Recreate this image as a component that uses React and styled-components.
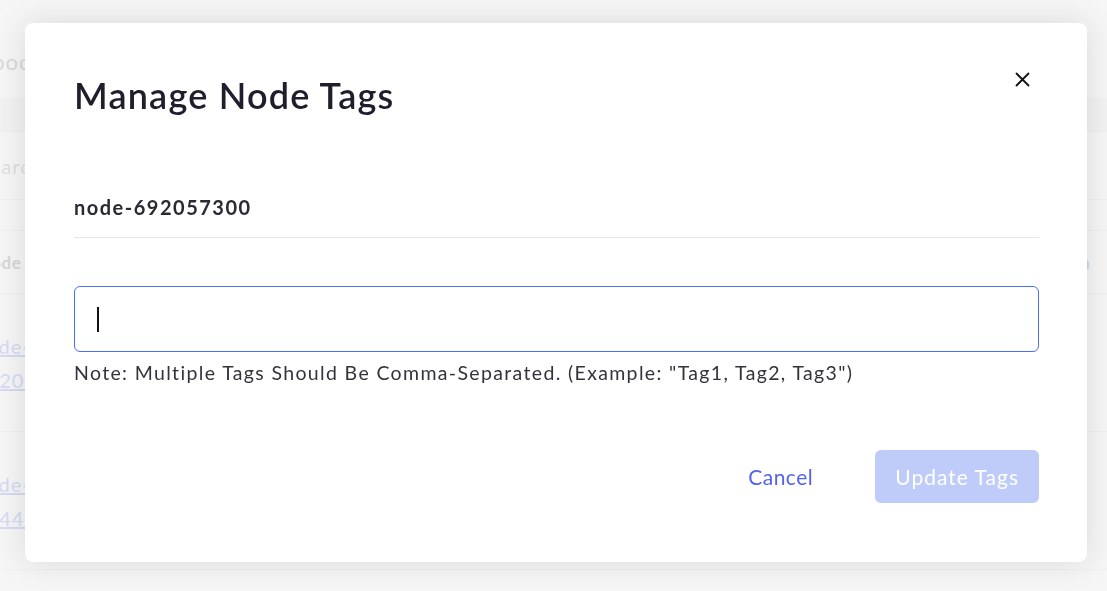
import React from "react";
import styled, { createGlobalStyle } from "styled-components";

const GlobalStyle = createGlobalStyle`
  html, body {
    margin: 0;
    height: 100%;
    overflow: hidden;
    background: #f5f5f5;
    font-family: "Lato", "Noto Sans", sans-serif;
  }
  * {
    box-sizing: border-box;
  }
`;

const nodes = [
  { id: "node-692057300" },
  { id: "node-814459071" },
];

function App() {
  return (
    <>
      <GlobalStyle />
      <Page>
        <PageTitle>Notebook</PageTitle>
        <TabBand />
        <SearchRow>Search</SearchRow>
        <Table>
          <HeadRow>
            <HeadCell>Node</HeadCell>
            <HeadCell $right>Action</HeadCell>
          </HeadRow>
          {nodes.map((n) => (
            <Row key={n.id}>
              <NodeLink>
                node-
                <br />
                {n.id.slice(5)}
              </NodeLink>
            </Row>
          ))}
        </Table>
      </Page>

      <Backdrop>
        <Modal>
          <ModalHeader>
            <Title>Manage Node Tags</Title>
            <CloseButton aria-label="Close">
              <svg width="15" height="15" viewBox="0 0 15 15">
                <path
                  d="M1.5 1.5 L13.5 13.5 M13.5 1.5 L1.5 13.5"
                  stroke="#111"
                  strokeWidth="1.8"
                  strokeLinecap="round"
                />
              </svg>
            </CloseButton>
          </ModalHeader>

          <NodeName>node-692057300</NodeName>

          <InputBox>
            <Caret />
            <TagInput type="text" aria-label="Tags" />
          </InputBox>
          <Note>
            Note: Multiple Tags Should Be Comma-Separated. (Example: "Tag1, Tag2,
            Tag3")
          </Note>

          <Actions>
            <TextButton>Cancel</TextButton>
            <PrimaryButton disabled>Update Tags</PrimaryButton>
          </Actions>
        </Modal>
      </Backdrop>
    </>
  );
}

/* background page, mostly hidden by the modal */

const Page = styled.main`
  margin-left: -22px;
  padding-top: 46px;
  color: #cfcfcf;
`;

const PageTitle = styled.h2`
  margin: 0 0 0 -38px;
  font-size: 22px;
  font-weight: 400;
  letter-spacing: 1px;
  line-height: 32px;
  color: #c9c9c9;
`;

const TabBand = styled.div`
  margin-top: 20px;
  height: 34px;
  background: #efefef;
  border-bottom: 1px solid #e9e9e9;
`;

const SearchRow = styled.div`
  height: 68px;
  display: flex;
  align-items: center;
  font-size: 20px;
  letter-spacing: 1px;
  color: #d2d2d2;
  border-bottom: 1px solid #ebebeb;
`;

const Table = styled.div`
  margin-top: 30px;
`;

const HeadRow = styled.div`
  height: 64px;
  display: flex;
  align-items: center;
  justify-content: space-between;
  border-top: 1px solid #ebebeb;
  border-bottom: 1px solid #ebebeb;
`;

const HeadCell = styled.span`
  font-size: 17px;
  font-weight: 700;
  letter-spacing: 0.5px;
  color: #c4c4c4;
  margin-right: ${({ $right }) => ($right ? "17px" : "0")};
`;

const Row = styled.div`
  height: 138px;
  display: flex;
  align-items: center;
  border-bottom: 1px solid #ebebeb;
`;

const NodeLink = styled.a`
  margin-left: -4px;
  font-size: 20px;
  letter-spacing: 1px;
  line-height: 34px;
  color: #c3caf3;
  text-decoration: underline;
`;

/* modal */

const Backdrop = styled.div`
  position: fixed;
  inset: 0;
  display: flex;
  align-items: flex-start;
  padding: 23px 20px 0 25px;
  background: rgba(250, 250, 250, 0.35);
`;

const Modal = styled.section`
  width: 100%;
  display: flex;
  flex-direction: column;
  padding: 48px 48px 59px 49px;
  background: #fff;
  border-radius: 8px;
  box-shadow: 0 0 32px rgba(0, 0, 0, 0.13);
  color: #24232f;
`;

const ModalHeader = styled.div`
  display: flex;
  justify-content: space-between;
  align-items: flex-start;
`;

const Title = styled.h1`
  margin: 0;
  font-size: 36px;
  font-weight: 600;
  letter-spacing: 1.2px;
  line-height: 48px;
  color: #1f1e2c;
`;

const CloseButton = styled.button`
  width: 32px;
  height: 32px;
  margin-top: -8px;
  margin-right: 1px;
  padding: 0;
  display: flex;
  align-items: center;
  justify-content: center;
  background: transparent;
  border: none;
  cursor: pointer;
`;

const NodeName = styled.div`
  margin-top: 75px;
  padding-bottom: 17px;
  border-bottom: 1px solid #e6e6e6;
  font-size: 20px;
  font-weight: 700;
  letter-spacing: 1.5px;
  line-height: 26px;
  color: #2a2a33;
`;

const InputBox = styled.label`
  margin-top: 48px;
  height: 66px;
  display: flex;
  align-items: center;
  padding-left: 22px;
  border: 1px solid #4c6ef5;
  border-radius: 6px;
`;

const Caret = styled.span`
  width: 1.5px;
  height: 25px;
  background: #111;
`;

const TagInput = styled.input`
  flex: 1;
  height: 100%;
  border: none;
  background: transparent;
  font: inherit;
  font-size: 18px;
  caret-color: transparent;
  &:focus {
    outline: none;
  }
`;

const Note = styled.p`
  margin: 9px 0 0;
  font-size: 19.5px;
  letter-spacing: 1.35px;
  line-height: 24px;
  color: #34333d;
`;

const Actions = styled.div`
  margin-top: 65px;
  display: flex;
  justify-content: flex-end;
  align-items: center;
  gap: 40px;
`;

const TextButton = styled.button`
  height: 53px;
  padding: 0 22px;
  background: transparent;
  border: none;
  font-family: inherit;
  font-size: 21px;
  letter-spacing: 0.5px;
  color: #5363ee;
  cursor: pointer;
`;

const PrimaryButton = styled.button`
  height: 53px;
  padding: 0 20px;
  background: #bfcbf9;
  border: none;
  border-radius: 6px;
  font-family: inherit;
  font-size: 21px;
  letter-spacing: 1px;
  color: #fff;
  cursor: default;
`;

export default App;
